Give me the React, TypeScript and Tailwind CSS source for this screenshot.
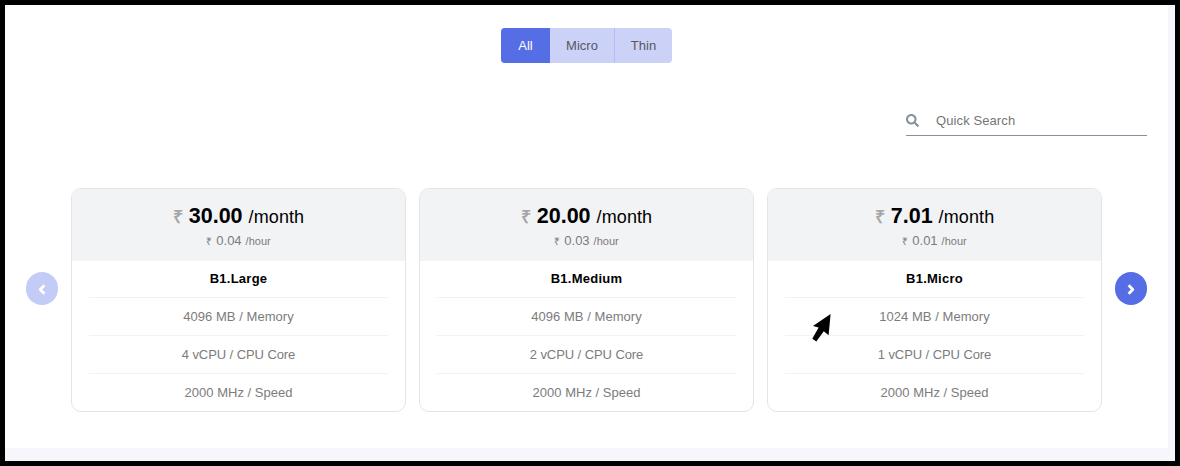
import React from "react";
import { FaSearch } from "react-icons/fa";

type Plan = {
  month: string;
  hour: string;
  name: string;
  memory: string;
  cores: string;
  speed: string;
};

const plans: Plan[] = [
  { month: "30.00", hour: "0.04", name: "B1.Large", memory: "4096 MB / Memory", cores: "4 vCPU / CPU Core", speed: "2000 MHz / Speed" },
  { month: "20.00", hour: "0.03", name: "B1.Medium", memory: "4096 MB / Memory", cores: "2 vCPU / CPU Core", speed: "2000 MHz / Speed" },
  { month: "7.01", hour: "0.01", name: "B1.Micro", memory: "1024 MB / Memory", cores: "1 vCPU / CPU Core", speed: "2000 MHz / Speed" },
];

function Tabs() {
  return (
    <div className="mx-auto flex h-[35px] w-[171px] overflow-hidden rounded-[4px] bg-[#ccd2f7] text-[13px] text-[#55585f]">
      <button className="w-[49px] bg-[#556ee6] text-white">All</button>
      <button className="w-[65px] border-r border-[#b3bcf3]">Micro</button>
      <button className="w-[57px]">Thin</button>
    </div>
  );
}

function Chevron({ d }: { d: string }) {
  return (
    <svg width="8" height="11" viewBox="0 0 8 11" fill="none" stroke="currentColor" strokeWidth="2.8" strokeLinejoin="round">
      <path d={d} />
    </svg>
  );
}

function Rupee({ className }: { className: string }) {
  return <span className={`font-['Liberation_Sans',sans-serif] ${className}`}>₹</span>;
}

function PlanCard({ plan }: { plan: Plan }) {
  return (
    <div className="h-[224px] w-[335px] shrink-0 overflow-hidden rounded-[10px] border border-[#e4e4e6] bg-white text-center">
      <div className="h-[72px] bg-[#f2f3f5] pt-[13px]">
        <div className="flex h-7 items-baseline justify-center whitespace-nowrap text-[18px] leading-7 text-black">
          <Rupee className="mr-[6px] text-[18px] text-[#a3a3a5] [-webkit-text-stroke:0.5px_#a3a3a5]" />
          <b className="mr-[6px] text-[21.5px]">{plan.month}</b>
          <span className="tracking-[0.1px]">/month</span>
        </div>
        <div className="mt-px flex h-5 items-baseline justify-center whitespace-nowrap text-[11px] leading-5 text-[#7b7b7d]">
          <Rupee className="mr-[4px] text-[10px]" />
          <span className="mr-[4px] text-[13px]">{plan.hour}</span>
          <span>/hour</span>
        </div>
      </div>
      <div className="mx-[17px] text-[13px] text-[#7c7c7c]">
        <div className="h-[37px] border-b border-[#f2f2f2] pt-px font-bold leading-[34px] tracking-[0.25px] text-black">{plan.name}</div>
        <div className="h-[38px] border-b border-[#f2f2f2] leading-[38px] tracking-[0.05px]">{plan.memory}</div>
        <div className="h-[38px] border-b border-[#f2f2f2] leading-[38px] tracking-[-0.08px]">{plan.cores}</div>
        <div className="h-[38px] leading-[38px] tracking-[0.02px]">{plan.speed}</div>
      </div>
    </div>
  );
}

export default function App() {
  return (
    <div className="relative h-[466px] w-[1180px] overflow-hidden border-[5px] border-black bg-[#f6f6fc] font-['Liberation_Sans',Arial,sans-serif]">
      <main className="h-[443px] w-[1163px] bg-white pl-[21px] pr-[21px] pt-[23px]">
        <Tabs />
        <div className="ml-auto mt-[43px] flex h-[30px] w-[241px] items-center gap-[17px] border-b border-[#8492a0]">
          <FaSearch className="size-[13px] text-[#8492a0]" />
          <span className="text-[13px] tracking-[0.1px] text-[#757575]">Quick Search</span>
        </div>
        <div className="mt-[52px] flex items-center gap-[13px]">
          <button aria-label="Previous" className="mb-[23px] flex h-[33px] w-8 shrink-0 items-center justify-center rounded-full bg-[#c3cbf7] pt-px text-white">
            <Chevron d="M6.4 1.2 L2.2 5.5 L6.4 9.8" />
          </button>
          {plans.map((p) => (
            <PlanCard key={p.name} plan={p} />
          ))}
          <button aria-label="Next" className="mb-[23px] flex h-[33px] w-8 shrink-0 items-center justify-center rounded-full bg-[#556ee6] pt-px text-white">
            <Chevron d="M1.6 1.2 L5.8 5.5 L1.6 9.8" />
          </button>
        </div>
      </main>
      <svg className="absolute left-[807px] top-[309px]" width="19" height="28" viewBox="0 0 19 28">
        <path d="M18.6 0 L16.6 21.2 L11.8 17.3 L4.3 27.6 L0.3 24.8 L6.6 13.4 L1 12 Z" fill="#000" />
      </svg>
    </div>
  );
}
